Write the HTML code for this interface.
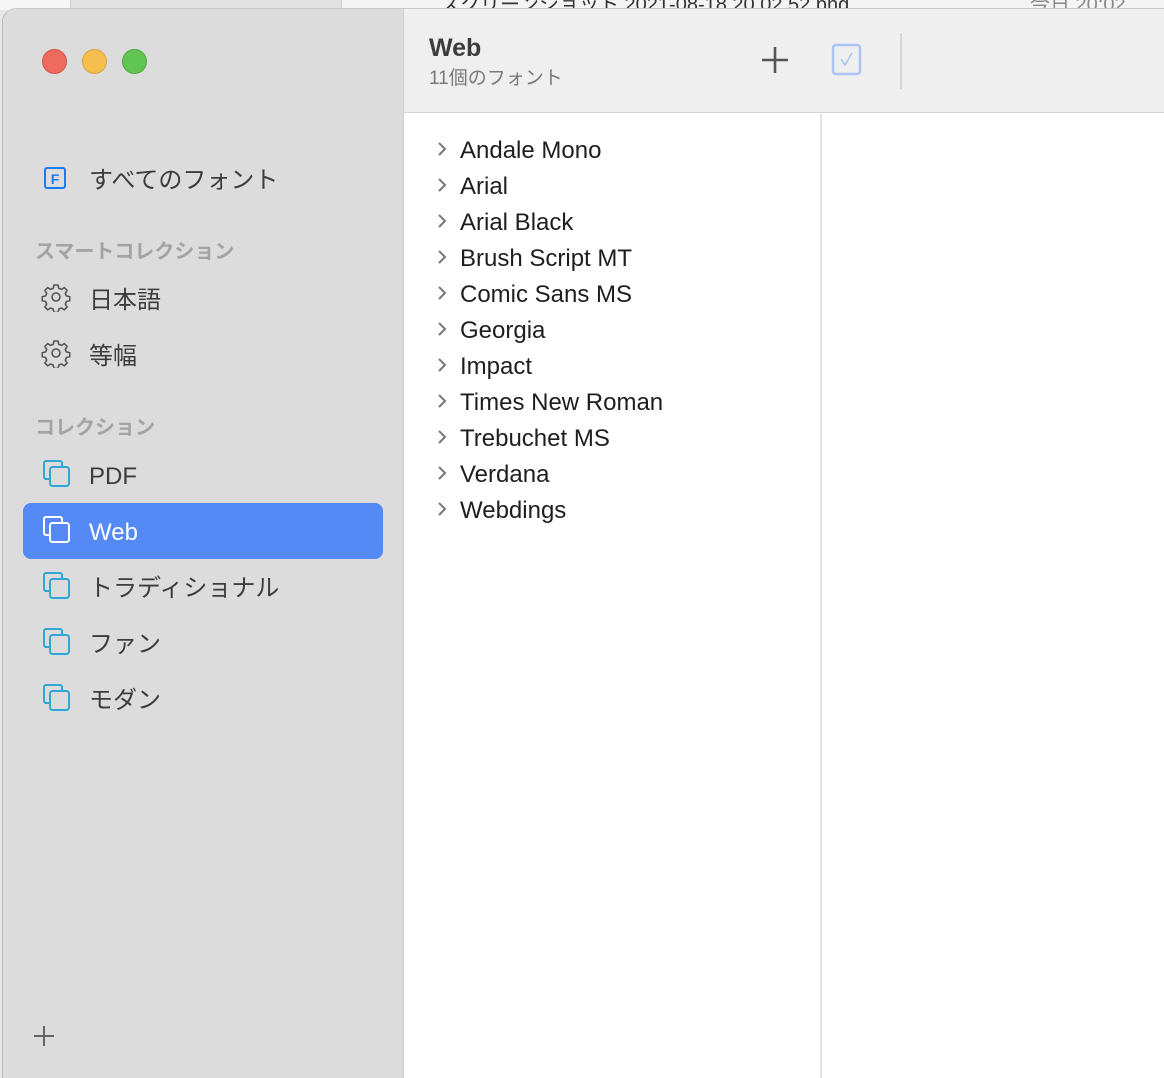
<!DOCTYPE html>
<html><head><meta charset="utf-8"><style>
*{margin:0;padding:0;box-sizing:border-box}
body{width:1164px;height:1068px;overflow:hidden;background:#e8e8e8;font-family:"Liberation Sans","Noto Sans CJK JP",sans-serif;position:relative}
.bgtop{position:absolute;left:0;top:0;width:1164px;height:10px;background:#f4f4f4}
.bgtop .a{position:absolute;left:0;top:0;width:70px;height:10px;background:#f6f6f6}
.bgtop .b{position:absolute;left:70px;top:0;width:272px;height:10px;background:#e2e2e2;border-left:1px solid #ccc;border-right:1px solid #ccc}
.bgtop .t{position:absolute;left:440px;top:-12px;font-size:20px;color:#333;white-space:nowrap}
.bgtop .t2{position:absolute;left:1030px;top:-12px;font-size:20px;color:#888;white-space:nowrap}
.win{position:absolute;left:2px;top:8px;width:1170px;height:1070px;border-radius:14px 0 0 0;overflow:hidden;background:#fff;border-left:1px solid #b8b8b8;border-top:1px solid #c8c8c8}
.side{position:absolute;left:0;top:0;width:401px;height:1070px;background:#dcdcdc;border-right:1px solid #d0d0d0}
.dot{position:absolute;top:40px;width:25px;height:25px;border-radius:50%}
.hdr{position:absolute;left:401px;top:0;width:770px;height:104px;background:#efefef;border-bottom:1px solid #d6d6d6}
.item{position:absolute;left:0;height:56px;font-size:24px;color:#3c3c3c;line-height:56px}
.item span{position:absolute;left:86px;top:2px;white-space:nowrap}
.item svg{position:absolute;left:38px;top:11px}
.sec{position:absolute;left:32px;font-size:20px;color:#a3a3a3;font-weight:bold;white-space:nowrap}
.sel{position:absolute;left:20px;top:494px;width:360px;height:56px;background:#5589f6;border-radius:8px}
.list{position:absolute;left:401px;top:97px}
.row{position:absolute;left:0;height:36px;width:400px;font-size:24px;color:#1e1e1e;line-height:36px;white-space:nowrap}
.row span{position:absolute;left:56px}
.row svg{position:absolute;left:32px;top:8px}
.vdiv{position:absolute;left:817px;top:105px;width:2px;height:970px;background:#e2e2e2}
</style></head><body>
<div class="bgtop"><div class="a"></div><div class="b"></div><div class="t">スクリーンショット 2021-08-18 20.02.52.png</div><div class="t2">今日 20:02</div></div>
<div class="win">
<div class="side">
<div class="dot" style="left:39px;background:#ec6a5e;border:1px solid #d4534a"></div>
<div class="dot" style="left:79px;background:#f5bf4f;border:1px solid #d9a23c"></div>
<div class="dot" style="left:119px;background:#61c554;border:1px solid #4ea940"></div>

<div class="item" style="top:142px"><svg width="26" height="26" viewBox="0 0 26 26" style="top:14px"><rect x="4" y="3" width="20" height="20" rx="2" fill="none" stroke="#1a7cf5" stroke-width="2"/><text x="14" y="19" font-size="14" font-weight="bold" fill="#1a7cf5" text-anchor="middle" font-family="Liberation Sans">F</text></svg><span>すべてのフォント</span></div>

<div class="sec" style="top:226px">スマートコレクション</div>
<div class="item" style="top:262px"><svg width="30" height="30" viewBox="0 0 30 30"><g fill="none" stroke="#555" stroke-width="1.6"><path d="M13 3h4l.8 3.3 2.6 1.1 2.9-1.8 2.8 2.8-1.8 2.9 1.1 2.6 3.3.8v4l-3.3.8-1.1 2.6 1.8 2.9-2.8 2.8-2.9-1.8-2.6 1.1-.8 3.3h-4l-.8-3.3-2.6-1.1-2.9 1.8-2.8-2.8 1.8-2.9-1.1-2.6-3.3-.8v-4l3.3-.8 1.1-2.6-1.8-2.9 2.8-2.8 2.9 1.8 2.6-1.1z"/><circle cx="15" cy="15" r="4"/></g></svg><span>日本語</span></div>
<div class="item" style="top:318px"><svg width="30" height="30" viewBox="0 0 30 30"><g fill="none" stroke="#555" stroke-width="1.6"><path d="M13 3h4l.8 3.3 2.6 1.1 2.9-1.8 2.8 2.8-1.8 2.9 1.1 2.6 3.3.8v4l-3.3.8-1.1 2.6 1.8 2.9-2.8 2.8-2.9-1.8-2.6 1.1-.8 3.3h-4l-.8-3.3-2.6-1.1-2.9 1.8-2.8-2.8 1.8-2.9-1.1-2.6-3.3-.8v-4l3.3-.8 1.1-2.6-1.8-2.9 2.8-2.8 2.9 1.8 2.6-1.1z"/><circle cx="15" cy="15" r="4"/></g></svg><span>等幅</span></div>

<div class="sec" style="top:402px">コレクション</div>
<div class="item" style="top:438px"><svg width="30" height="30" viewBox="0 0 30 30"><g fill="none" stroke="#2fa6d8" stroke-width="2"><path d="M9 21H5a2 2 0 0 1-2-2V5a2 2 0 0 1 2-2h14a2 2 0 0 1 2 2v4"/><rect x="9" y="9" width="19" height="19" rx="2.5"/></g></svg><span>PDF</span></div>
<div class="sel"></div>
<div class="item" style="top:494px;color:#fff"><svg width="30" height="30" viewBox="0 0 30 30"><g fill="none" stroke="#fff" stroke-width="2"><path d="M9 21H5a2 2 0 0 1-2-2V5a2 2 0 0 1 2-2h14a2 2 0 0 1 2 2v4"/><rect x="9" y="9" width="19" height="19" rx="2.5"/></g></svg><span>Web</span></div>
<div class="item" style="top:550px"><svg width="30" height="30" viewBox="0 0 30 30"><g fill="none" stroke="#2fa6d8" stroke-width="2"><path d="M9 21H5a2 2 0 0 1-2-2V5a2 2 0 0 1 2-2h14a2 2 0 0 1 2 2v4"/><rect x="9" y="9" width="19" height="19" rx="2.5"/></g></svg><span>トラディショナル</span></div>
<div class="item" style="top:606px"><svg width="30" height="30" viewBox="0 0 30 30"><g fill="none" stroke="#2fa6d8" stroke-width="2"><path d="M9 21H5a2 2 0 0 1-2-2V5a2 2 0 0 1 2-2h14a2 2 0 0 1 2 2v4"/><rect x="9" y="9" width="19" height="19" rx="2.5"/></g></svg><span>ファン</span></div>
<div class="item" style="top:662px"><svg width="30" height="30" viewBox="0 0 30 30"><g fill="none" stroke="#2fa6d8" stroke-width="2"><path d="M9 21H5a2 2 0 0 1-2-2V5a2 2 0 0 1 2-2h14a2 2 0 0 1 2 2v4"/><rect x="9" y="9" width="19" height="19" rx="2.5"/></g></svg><span>モダン</span></div>

<svg style="position:absolute;left:30px;top:1016px" width="22" height="22" viewBox="0 0 22 22"><path d="M11 1v20M1 11h20" stroke="#666" stroke-width="2"/></svg>
</div>

<div class="hdr">
<div style="position:absolute;left:25px;top:25px;font-size:25px;font-weight:bold;color:#3c3c3c">Web</div>
<div style="position:absolute;left:25px;top:54px;font-size:19px;color:#7a7a7a;white-space:nowrap">11個のフォント</div>
<svg style="position:absolute;left:356px;top:36px" width="30" height="30" viewBox="0 0 30 30"><path d="M15 2v26M2 15h26" stroke="#555" stroke-width="2.6"/></svg>
<svg style="position:absolute;left:427px;top:34px" width="32" height="34" viewBox="0 0 32 34"><rect x="2" y="2" width="27" height="29" rx="3" fill="none" stroke="#a9c4f5" stroke-width="2.5"/><path d="M10 16l4 6 7-12" fill="none" stroke="#a9c4f5" stroke-width="1.6"/></svg>
<div style="position:absolute;left:496px;top:24px;width:2px;height:56px;background:#d6d6d6"></div>
</div>

<div class="list">
<div class="row" style="top:27px"><svg width="12" height="16" viewBox="0 0 12 16"><path d="M3 2l6 6-6 6" fill="none" stroke="#777" stroke-width="2"/></svg><span>Andale Mono</span></div>
<div class="row" style="top:63px"><svg width="12" height="16" viewBox="0 0 12 16"><path d="M3 2l6 6-6 6" fill="none" stroke="#777" stroke-width="2"/></svg><span>Arial</span></div>
<div class="row" style="top:99px"><svg width="12" height="16" viewBox="0 0 12 16"><path d="M3 2l6 6-6 6" fill="none" stroke="#777" stroke-width="2"/></svg><span>Arial Black</span></div>
<div class="row" style="top:135px"><svg width="12" height="16" viewBox="0 0 12 16"><path d="M3 2l6 6-6 6" fill="none" stroke="#777" stroke-width="2"/></svg><span>Brush Script MT</span></div>
<div class="row" style="top:171px"><svg width="12" height="16" viewBox="0 0 12 16"><path d="M3 2l6 6-6 6" fill="none" stroke="#777" stroke-width="2"/></svg><span>Comic Sans MS</span></div>
<div class="row" style="top:207px"><svg width="12" height="16" viewBox="0 0 12 16"><path d="M3 2l6 6-6 6" fill="none" stroke="#777" stroke-width="2"/></svg><span>Georgia</span></div>
<div class="row" style="top:243px"><svg width="12" height="16" viewBox="0 0 12 16"><path d="M3 2l6 6-6 6" fill="none" stroke="#777" stroke-width="2"/></svg><span>Impact</span></div>
<div class="row" style="top:279px"><svg width="12" height="16" viewBox="0 0 12 16"><path d="M3 2l6 6-6 6" fill="none" stroke="#777" stroke-width="2"/></svg><span>Times New Roman</span></div>
<div class="row" style="top:315px"><svg width="12" height="16" viewBox="0 0 12 16"><path d="M3 2l6 6-6 6" fill="none" stroke="#777" stroke-width="2"/></svg><span>Trebuchet MS</span></div>
<div class="row" style="top:351px"><svg width="12" height="16" viewBox="0 0 12 16"><path d="M3 2l6 6-6 6" fill="none" stroke="#777" stroke-width="2"/></svg><span>Verdana</span></div>
<div class="row" style="top:387px"><svg width="12" height="16" viewBox="0 0 12 16"><path d="M3 2l6 6-6 6" fill="none" stroke="#777" stroke-width="2"/></svg><span>Webdings</span></div>
</div>
<div class="vdiv"></div>
</div>
</body></html>
